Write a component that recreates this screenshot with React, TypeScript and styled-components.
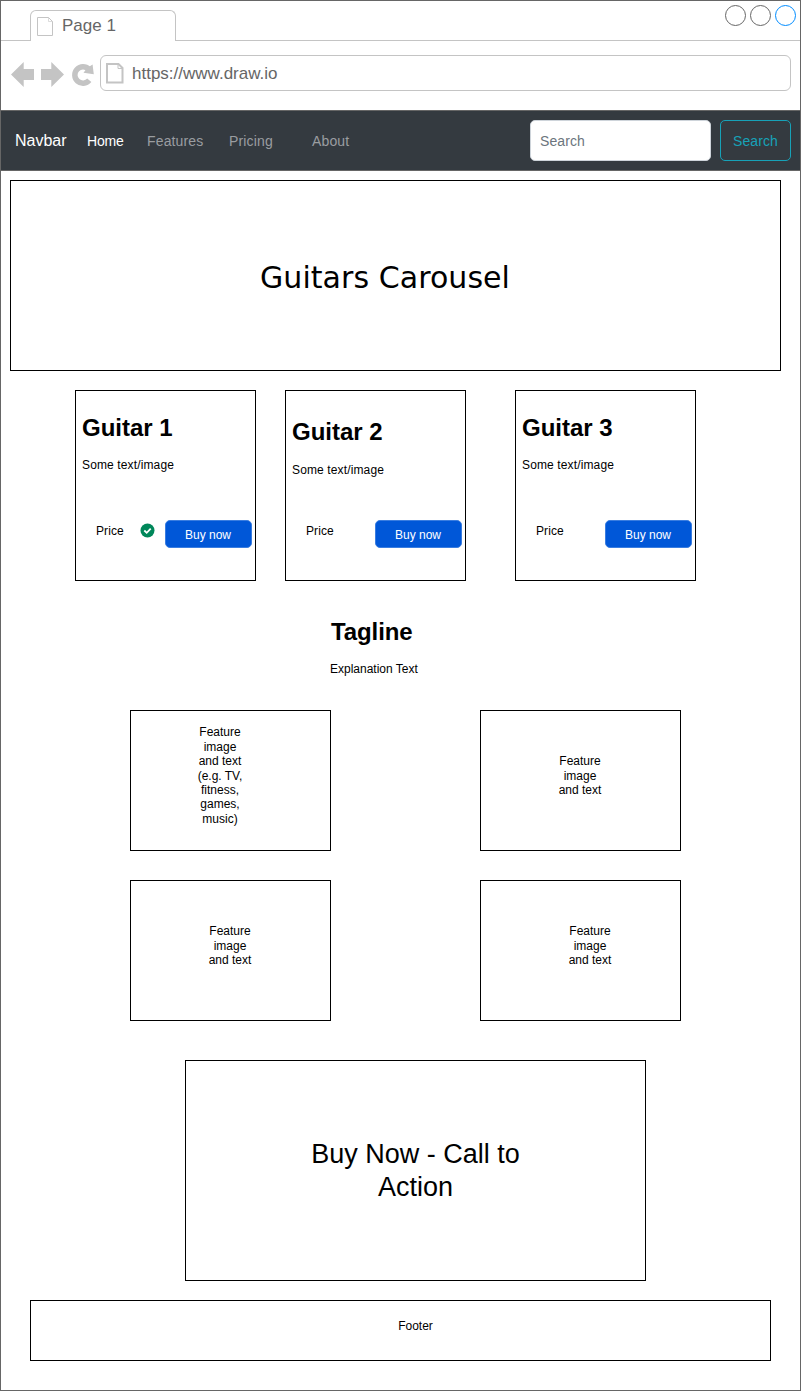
import React from "react";
import styled, { createGlobalStyle } from "styled-components";

const GlobalStyle = createGlobalStyle`
  *, *::before, *::after { box-sizing: border-box; }
  body {
    margin: 0;
    background: #fff;
    color: #000;
    font-family: "Liberation Sans", Arial, sans-serif;
    font-size: 12px;
    line-height: 1.2;
  }
  h1, h2, p { margin: 0; }
  button, input { font: inherit; }
`;

const line = "#c4c4c4";

const Window = styled.div`
  width: 801px;
  height: 1391px;
  border: 1px solid #666;
  display: flex;
  flex-direction: column;
  overflow: hidden;
`;

const TabStrip = styled.header`
  display: flex;
  align-items: flex-end;
  height: 40px;
`;

const StripLine = styled.div<{ $width?: number }>`
  width: ${(p) => (p.$width ? `${p.$width}px` : "auto")};
  flex: ${(p) => (p.$width ? "none" : "1")};
  height: 40px;
  border-bottom: 1px solid ${line};
  display: flex;
  justify-content: flex-end;
  padding: 3px 3px 0 0;
`;

const Tab = styled.div`
  width: 146px;
  height: 31px;
  border: 1px solid ${line};
  border-bottom: none;
  border-radius: 6px 6px 0 0;
  display: flex;
  padding: 5px 0 0 5px;
  gap: 7px;
  color: #666;
  font-size: 17px;
  line-height: 20px;
`;

const AddressRow = styled.div`
  display: flex;
  height: 69px;
  padding: 14px 9px 0 9px;
`;

const AddressBar = styled.div`
  flex: 1;
  height: 36px;
  border: 1px solid ${line};
  border-radius: 6px;
  display: flex;
  align-items: center;
  padding-left: 4px;
  gap: 6px;
  color: #666;
  font-size: 17px;
  line-height: 20px;
`;

const Url = styled.span`
  padding-top: 2px;
`;

const Navbar = styled.nav`
  display: flex;
  align-items: center;
  height: 61px;
  background: #343a40;
  border: 1px solid #666;
  border-width: 1px 0;
  padding: 0 9px 0 14px;
  font-size: 14px;
`;

const Brand = styled.span`
  width: 72px;
  color: #fff;
  font-size: 16px;
`;

const NavLink = styled.a<{ $width: number; $active?: boolean }>`
  width: ${(p) => p.$width}px;
  padding-top: 1px;
  color: ${(p) => (p.$active ? "#fff" : "#9a9da0")};
  letter-spacing: ${(p) => (p.$active ? "-0.2px" : "0.15px")};
`;

const SearchInput = styled.input`
  width: 181px;
  height: 41px;
  margin-left: auto;
  padding: 1px 9px 0;
  border: 1px solid #ced4da;
  border-radius: 5px;
  background: #fff;
  letter-spacing: 0.1px;
  &::placeholder {
    color: #6c757d;
    opacity: 1;
  }
`;

const SearchButton = styled.button`
  width: 71px;
  height: 41px;
  margin-left: 9px;
  padding: 1px 0 0;
  border: 1px solid #17a2b8;
  border-radius: 5px;
  background: none;
  color: #17a2b8;
  letter-spacing: 0.1px;
`;

const Main = styled.main`
  flex: 1;
  padding: 9px 0 0 9px;
`;

const Carousel = styled.section`
  width: 771px;
  height: 191px;
  border: 1px solid #000;
  padding: 79px 21px 0 0;
  text-align: center;
  font-family: "DejaVu Sans", Verdana, sans-serif;
  font-size: 30px;
  line-height: 36px;
  letter-spacing: 0.06px;
`;

const Products = styled.section`
  display: grid;
  grid-template-columns: 181px 181px 181px;
  column-gap: 29px;
  margin: 19px 0 0 65px;
  & > :nth-child(3) {
    margin-left: 20px;
  }
`;

const Card = styled.article<{ $shift?: number }>`
  width: 181px;
  height: 191px;
  border: 1px solid #000;
  padding: ${(p) => 23 + (p.$shift ?? 0)}px 3px 0 6px;
  display: flex;
  flex-direction: column;
`;

const Heading = styled.h2`
  font-size: 24px;
  line-height: 28px;
  font-weight: bold;
`;

const CardText = styled.p<{ $top: number; $spacing?: number }>`
  margin-top: ${(p) => p.$top}px;
  line-height: 14px;
  letter-spacing: ${(p) => p.$spacing ?? 0}px;
`;

const PurchaseRow = styled.div`
  display: flex;
  margin: auto 0 32px 14px;
  height: 28px;
`;

const Price = styled.span`
  width: 44px;
  padding-top: 4px;
  line-height: 14px;
  letter-spacing: 0.1px;
`;

const BuyButton = styled.button`
  width: 87px;
  height: 28px;
  margin-left: auto;
  padding: 2px 1px 0 0;
  border: 1px solid #3a7de0;
  border-radius: 5px;
  background: #0057d8;
  color: #fff;
`;

const Tagline = styled.section`
  margin: 37px 0 0 320px;
  ${Heading} {
    padding-left: 1px;
    letter-spacing: -0.1px;
  }
`;

const Features = styled.section`
  display: grid;
  grid-template-columns: 201px 201px;
  gap: 29px 149px;
  margin: 34px 0 0 120px;
`;

const Feature = styled.article<{ $shift: number }>`
  height: 141px;
  border: 1px solid #000;
  display: flex;
  align-items: center;
  justify-content: center;
  padding: 0 ${(p) => Math.max(0, -p.$shift) * 2 + 1}px 9.4px ${(p) => Math.max(0, p.$shift) * 2}px;
`;

const FeatureText = styled.p`
  width: 50px;
  text-align: center;
  line-height: 14.4px;
`;

const CallToAction = styled.section`
  width: 461px;
  height: 221px;
  margin: 39px 0 0 175px;
  border: 1px solid #000;
  display: flex;
  justify-content: center;
  padding: 77px 0 0;
  text-align: center;
  font-size: 27px;
  line-height: 33px;
`;

const CtaText = styled.p`
  width: 230px;
`;

const Footer = styled.footer`
  width: 741px;
  height: 61px;
  margin: 19px 0 0 20px;
  border: 1px solid #000;
  padding: 18px 0 0 30px;
  text-align: center;
  line-height: 14px;
`;

const CheckSvg = styled.svg`
  margin-top: 3px;
`;

const CheckIcon = () => (
  <CheckSvg width="15" height="15" viewBox="0 0 15 15">
    <circle cx="7.5" cy="7.5" r="7" fill="#00875a" />
    <path d="M4.3 7.5 L6.7 9.8 L10.7 5.7" fill="none" stroke="#fff" strokeWidth="1.8" />
  </CheckSvg>
);

const WindowControls = () => (
  <svg width="73" height="23" viewBox="0 0 73 23" fill="none">
    <circle cx="11.5" cy="11.5" r="10" stroke="#666" />
    <circle cx="36.5" cy="11.5" r="10" stroke="#666" />
    <circle cx="61.5" cy="11.5" r="10" stroke="#008cff" />
  </svg>
);

const TabPageIcon = () => (
  <svg width="19" height="22" viewBox="0 0 19 22" fill="none" stroke={line}>
    <path d="M1.5 1.5 H12.5 L16.5 5.5 V19.5 H1.5 Z" />
    <path d="M12.5 1.5 V5.5 H16.5" strokeOpacity="0.6" />
  </svg>
);

const UrlPageIcon = () => (
  <svg width="21" height="24" viewBox="0 0 21 24" fill="none" stroke={line}>
    <path d="M2 3 H13.5 L17.5 7 V21.5 H2 Z" strokeWidth="2" />
    <path d="M13 3.5 V7.5 H17" />
  </svg>
);

const HistoryIcons = () => (
  <svg width="90" height="40" viewBox="10 55 90 40" fill={line}>
    <path d="M11 74.5 L23.7 62 V69 H34 V80 H23.7 V87 Z" />
    <path d="M64 74.5 L51.3 62 V69 H41 V80 H51.3 V87 Z" />
    <path d="M89.3 80.3 A8.2 8.2 0 1 1 88.8 69.2" fill="none" stroke={line} strokeWidth="5.5" />
    <path d="M92.6 64.5 L93.8 74.3 L83.5 72.7 L87 68 Z" />
  </svg>
);

const products = [
  { name: "Guitar 1", shift: 0, gap: 16, inCart: true },
  { name: "Guitar 2", shift: 4, gap: 17, inCart: false },
  { name: "Guitar 3", shift: 0, gap: 16, inCart: false },
];

const features = [
  { text: "Feature image and text (e.g. TV, fitness, games, music)", shift: -10 },
  { text: "Feature image and text", shift: 0 },
  { text: "Feature image and text", shift: 0 },
  { text: "Feature image and text", shift: 10 },
];

export default function App() {
  return (
    <>
      <GlobalStyle />
      <Window>
        <TabStrip>
          <StripLine $width={29} />
          <Tab>
            <TabPageIcon />
            Page 1
          </Tab>
          <StripLine>
            <WindowControls />
          </StripLine>
        </TabStrip>
        <AddressRow>
          <HistoryIcons />
          <AddressBar>
            <UrlPageIcon />
            <Url>https://www.draw.io</Url>
          </AddressBar>
        </AddressRow>
        <Navbar>
          <Brand>Navbar</Brand>
          <NavLink $width={60} $active>Home</NavLink>
          <NavLink $width={82}>Features</NavLink>
          <NavLink $width={83}>Pricing</NavLink>
          <NavLink $width={60}>About</NavLink>
          <SearchInput placeholder="Search" />
          <SearchButton>Search</SearchButton>
        </Navbar>
        <Main>
          <Carousel>Guitars Carousel</Carousel>
          <Products>
            {products.map((p) => (
              <Card key={p.name} $shift={p.shift}>
                <Heading>{p.name}</Heading>
                <CardText $top={p.gap} $spacing={0.13}>Some text/image</CardText>
                <PurchaseRow>
                  <Price>Price</Price>
                  {p.inCart && <CheckIcon />}
                  <BuyButton>Buy now</BuyButton>
                </PurchaseRow>
              </Card>
            ))}
          </Products>
          <Tagline>
            <Heading>Tagline</Heading>
            <CardText $top={16}>Explanation Text</CardText>
          </Tagline>
          <Features>
            {features.map((f, i) => (
              <Feature key={i} $shift={f.shift}>
                <FeatureText>{f.text}</FeatureText>
              </Feature>
            ))}
          </Features>
          <CallToAction>
            <CtaText>Buy Now - Call to Action</CtaText>
          </CallToAction>
          <Footer>Footer</Footer>
        </Main>
      </Window>
    </>
  );
}
